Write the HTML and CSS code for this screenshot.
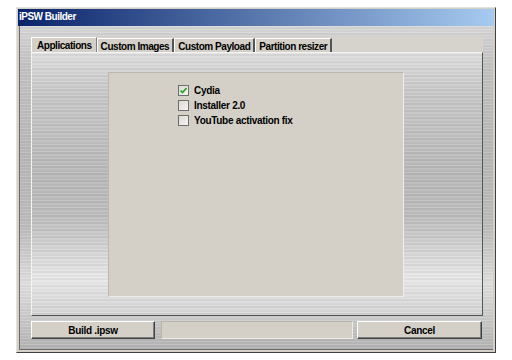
FILE: index.html
```html
<!DOCTYPE html>
<html lang="en">
<head>
  <meta charset="UTF-8" />
  <title>iPSW Builder</title>
  <link rel="stylesheet" href="styles.css">
</head>
<body>

<div class="window">
  <div class="titlebar">iPSW Builder</div>

  <div class="client">
    <div class="tabs">
      <button class="tab active">Applications</button>
      <button class="tab">Custom Images</button>
      <button class="tab">Custom Payload</button>
      <button class="tab">Partition resizer</button>
    </div>

    <div class="panel">
      <div class="group">
        <label class="check">
          <span class="box checked">
            <svg width="9" height="9" viewBox="0 0 9 9"><path d="M1.5 4.5 L3.5 6.5 L7.5 2" fill="none" stroke="#21a121" stroke-width="1.6"/></svg>
          </span>
          Cydia
        </label>
        <label class="check"><span class="box"></span>Installer 2.0</label>
        <label class="check"><span class="box"></span>YouTube activation fix</label>
      </div>
    </div>

    <div class="actions">
      <button class="btn build">Build .ipsw</button>
      <div class="progress"></div>
      <button class="btn cancel">Cancel</button>
    </div>
  </div>
</div>

</body>
</html>
```

FILE: styles.css
```css
* {
  box-sizing: border-box;
}

body {
  margin: 0;
  background: #ffffff;
  font-family: "Liberation Sans", Arial, sans-serif;
  font-size: 10px;
  font-weight: bold;
  color: #000;
}

.window {
  margin: 7px 0 0 16px;
  width: 480px;
  height: 346px;
  background: #d4d0c8;
  border: 1px solid;
  border-color: #e4e2dc #404040 #404040 #e4e2dc;
  padding: 1px;
  display: flex;
  flex-direction: column;
}

.titlebar {
  height: 17px;
  padding: 2px 0 0 1px;
  background: linear-gradient(to right, #0a246a, #a6caf0);
  color: white;
  letter-spacing: -0.5px;
}

.client {
  flex: 1;
  margin: 0 1px 1px 1px;
  border-left: 1px solid #6c6c6c;
  border-bottom: 1px solid #6c6c6c;
  padding: 11px 10px 10px 11px;
  display: flex;
  flex-direction: column;
  background:
    repeating-linear-gradient(to bottom, rgba(255,255,255,0.14) 0 1px, rgba(0,0,0,0.04) 1px 3px, rgba(255,255,255,0.07) 3px 4px, rgba(0,0,0,0.02) 4px 6px),
    linear-gradient(to bottom, #d8d8d8 0%, #c4c4c4 12%, #b9b9b9 40%, #bdbdbd 62%, #e0e0e0 80%, #c8c8c8 92%, #b4b4b4 100%);
}

.tabs {
  display: flex;
  height: 15px;
  background: #d6d3cc;
}

.tab {
  font: inherit;
  letter-spacing: -0.45px;
  height: 15px;
  margin: 1px 0 0 0;
  padding: 0 3px;
  background: #d4d0c8;
  border: none;
  border-left: 1px solid #ffffff;
  border-top: 1px solid #ffffff;
  border-right: 2px solid #555555;
  color: #000;
  line-height: 13px;
}

.tab.active {
  margin-top: 0;
  padding: 0 4px 0 5px;
  border-right: 1px solid #808080;
}

.panel {
  flex: 1;
  border: 1px solid;
  border-color: #f4f4f4 #555555 #555555 #f4f4f4;
  padding: 19px 78px 18px 76px;
  display: flex;
  background:
    repeating-linear-gradient(to bottom, rgba(255,255,255,0.16) 0 1px, rgba(0,0,0,0.045) 1px 3px, rgba(255,255,255,0.08) 3px 5px, rgba(0,0,0,0.02) 5px 7px),
    linear-gradient(to bottom, #dedede 0%, #c8c8c8 15%, #b9b9b9 45%, #bcbcbc 62%, #e8e8e8 86%, #d4d4d4 100%);
}

.group {
  flex: 1;
  background: #d4d0c8;
  border: 1px solid;
  border-color: #bcb8b0 #f0eee8 #f0eee8 #bcb8b0;
  padding: 12px 0 0 69px;
  display: flex;
  flex-direction: column;
  gap: 4px;
}

.check {
  display: flex;
  align-items: center;
  gap: 5px;
  height: 11px;
  letter-spacing: -0.3px;
}

.box {
  width: 11px;
  height: 11px;
  border: 1px solid #6e6e6e;
  background: linear-gradient(135deg, #dcdad4, #f4f3f0);
  display: flex;
  align-items: center;
  justify-content: center;
}

.actions {
  display: flex;
  margin-top: 5px;
  height: 18px;
}

.btn {
  font: inherit;
  letter-spacing: -0.3px;
  height: 18px;
  background: #d4d0c8;
  border: 1px solid;
  border-color: #ffffff #404040 #404040 #ffffff;
  box-shadow: inset -1px -1px #808080;
  color: #000;
  padding: 0;
}

.build {
  width: 124px;
}

.progress {
  width: 192px;
  margin: 0 4px 0 6px;
  background: #d4d0c8;
  border: 1px solid;
  border-color: #b8b4ac #eeece6 #eeece6 #b8b4ac;
}

.cancel {
  width: 125px;
}
```
